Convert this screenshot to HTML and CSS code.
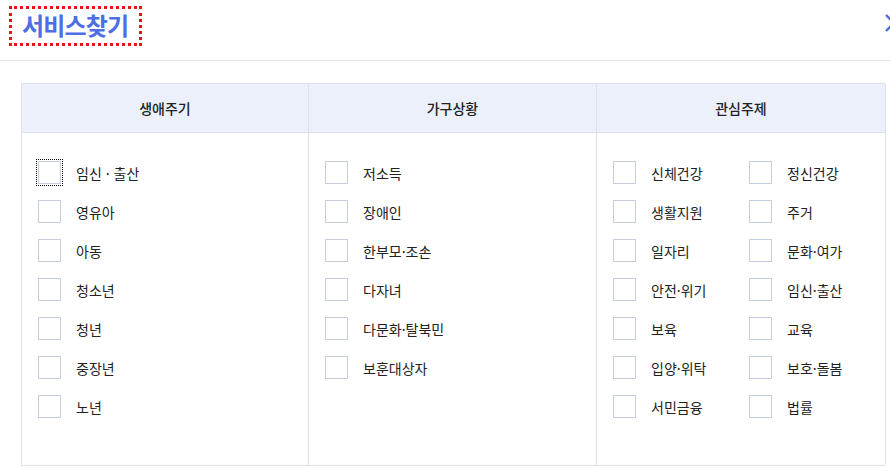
FILE: index.html
```html
<!DOCTYPE html>
<html lang="ko">
<head>
<meta charset="utf-8">
<link rel="stylesheet" href="styles.css">
</head>
<body>
<div class="modal">
  <header class="modal-head">
    <h1 class="title">서비스찾기</h1>
    <button class="close" aria-label="닫기">
      <svg width="20" height="20" viewBox="0 0 20 20"><path d="M2 2 L18 18 M18 2 L2 18" stroke="#4e6ee6" stroke-width="2.4" fill="none"/></svg>
    </button>
  </header>
  <div class="table">
    <div class="th">생애주기</div>
    <div class="th">가구상황</div>
    <div class="th last">관심주제</div>
    <div class="td">
      <ul class="list one">
        <li><span class="box focus"></span>임신 · 출산</li>
        <li><span class="box"></span>영유아</li>
        <li><span class="box"></span>아동</li>
        <li><span class="box"></span>청소년</li>
        <li><span class="box"></span>청년</li>
        <li><span class="box"></span>중장년</li>
        <li><span class="box"></span>노년</li>
      </ul>
    </div>
    <div class="td">
      <ul class="list one">
        <li><span class="box"></span>저소득</li>
        <li><span class="box"></span>장애인</li>
        <li><span class="box"></span>한부모·조손</li>
        <li><span class="box"></span>다자녀</li>
        <li><span class="box"></span>다문화·탈북민</li>
        <li><span class="box"></span>보훈대상자</li>
      </ul>
    </div>
    <div class="td last">
      <ul class="list two">
        <li><span class="box"></span>신체건강</li>
        <li><span class="box"></span>정신건강</li>
        <li><span class="box"></span>생활지원</li>
        <li><span class="box"></span>주거</li>
        <li><span class="box"></span>일자리</li>
        <li><span class="box"></span>문화·여가</li>
        <li><span class="box"></span>안전·위기</li>
        <li><span class="box"></span>임신·출산</li>
        <li><span class="box"></span>보육</li>
        <li><span class="box"></span>교육</li>
        <li><span class="box"></span>입양·위탁</li>
        <li><span class="box"></span>보호·돌봄</li>
        <li><span class="box"></span>서민금융</li>
        <li><span class="box"></span>법률</li>
      </ul>
    </div>
  </div>
</div>
</body>
</html>
```

FILE: styles.css
```css
* { box-sizing: border-box; }
html, body { margin: 0; padding: 0; background: #fff; overflow: hidden; }
body {
  font-family: "Noto Sans CJK KR", "Noto Sans", sans-serif;
  color: #222;
  width: 890px;
  height: 468px;
}
.modal { width: 890px; }
.modal-head {
  height: 61px;
  border-bottom: 1px solid #e2e2e2;
  display: flex;
  align-items: flex-start;
  justify-content: space-between;
  position: relative;
}
.title {
  margin: 6px 0 0 9px;
  padding: 0 14px 0 13px;
  height: 40px;
  line-height: 38px;
  font-size: 24px;
  font-weight: 700;
  color: #4e6ee6;
  letter-spacing: -0.8px;
  outline: 3px dotted #ee1111;
  outline-offset: -3px;
}
.close {
  position: absolute;
  left: 884px;
  top: 13px;
  width: 20px;
  height: 20px;
  padding: 0;
  border: 0;
  background: none;
}
.close svg { display: block; }
.table {
  margin: 22px 0 0 21px;
  width: 864px;
  display: grid;
  grid-template-columns: 287px 288px 289px;
  border-top: 1px solid #dde1ea;
  border-left: 1px solid #dde1ea;
  border-bottom: 1px solid #dde1ea;
}
.th {
  height: 49px;
  background: #ebf0fa;
  border-right: 1px solid #dde1ea;
  border-bottom: 1px solid #dde1ea;
  display: flex;
  align-items: center;
  justify-content: center;
  font-size: 14px;
  font-weight: 500;
  color: #222;
}
.td {
  height: 332px;
  border-right: 1px solid #dde1ea;
  padding: 28px 0 0 16px;
}
.list {
  list-style: none;
  margin: 0;
  padding: 0;
  display: grid;
  row-gap: 16px;
}
.list.two { grid-template-columns: 136px 120px; }
.list li {
  display: flex;
  align-items: center;
  height: 23px;
  font-size: 14px;
  color: #222;
}
.box {
  width: 23px;
  height: 23px;
  border: 1px solid #c6cde0;
  background: #fff;
  margin-right: 15px;
  flex: none;
}
.box.focus { outline: 1px dotted #000; outline-offset: 1px; }
```
